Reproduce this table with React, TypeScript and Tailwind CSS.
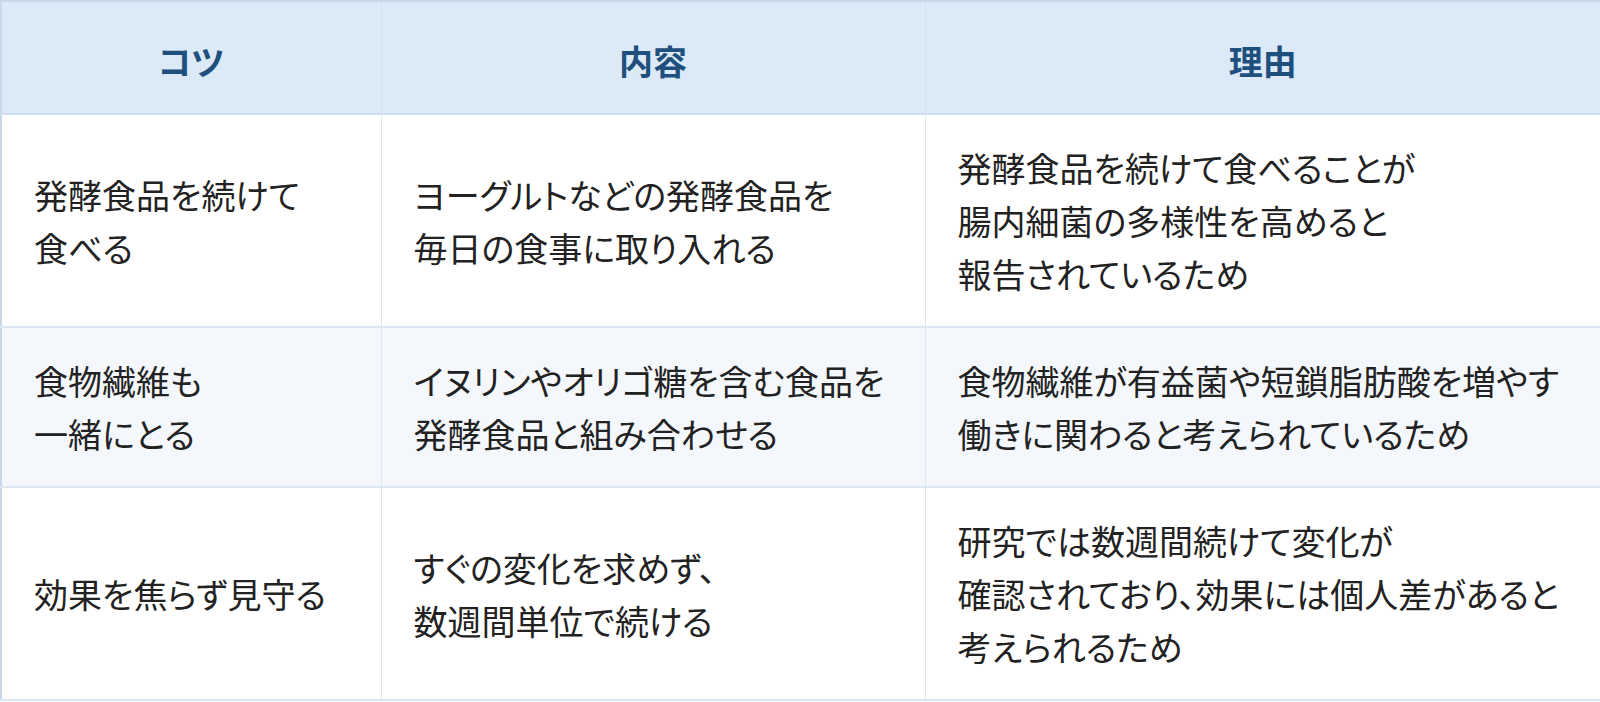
const rows = [
  {
    tip: ['発酵食品を続けて', '食べる'],
    detail: ['ヨーグルトなどの発酵食品を', '毎日の食事に取り入れる'],
    reason: ['発酵食品を続けて食べることが', '腸内細菌の多様性を高めると', '報告されているため'],
  },
  {
    tip: ['食物繊維も', '一緒にとる'],
    detail: ['イヌリンやオリゴ糖を含む食品を', '発酵食品と組み合わせる'],
    reason: ['食物繊維が有益菌や短鎖脂肪酸を増やす', '働きに関わると考えられているため'],
  },
  {
    tip: ['効果を焦らず見守る'],
    detail: ['すぐの変化を求めず、', '数週間単位で続ける'],
    reason: ['研究では数週間続けて変化が', '確認されており、効果には個人差があると', '考えられるため'],
  },
];

// Render an array of lines with explicit breaks
const Lines = ({ lines }: { lines: string[] }) => (
  <>
    {lines.map((l, i) => (
      <span key={i} className="block whitespace-nowrap">
        {l}
      </span>
    ))}
  </>
);

export default function App() {
  return (
    <div className="w-[1600px] h-[702px] bg-white font-['Noto_Sans_CJK_JP','Noto_Sans',sans-serif]">
      <table className="w-[1600px] table-fixed border-collapse border-2 border-[#c6d8ea] [font-feature-settings:'palt']">
        <colgroup>
          <col className="w-[380px]" />
          <col className="w-[544px]" />
          <col className="w-[676px]" />
        </colgroup>
        <thead>
          <tr className="h-[113px] bg-[#dce9f6] border-b-2 border-[#cfdef0]">
            {['コツ', '内容', '理由'].map((h) => (
              <th
                key={h}
                className="border-x border-[#d3e1f0] text-center align-middle text-[34px] font-bold text-[#1e4f7d] pt-[6px]"
              >
                {h}
              </th>
            ))}
          </tr>
        </thead>
        <tbody>
          {rows.map((r, i) => (
            <tr
              key={i}
              className={`${i === 1 ? 'bg-[#f4f7fc]' : 'bg-white'} border-b-2 border-[#dde7f2]`}
            >
              {[r.tip, r.detail, r.reason].map((c, j) => (
                <td
                  key={j}
                  className="border-x border-[#dde7f2] align-middle px-[32px] py-[26px] text-[34px] leading-[53px] text-[#222222]"
                >
                  <Lines lines={c} />
                </td>
              ))}
            </tr>
          ))}
        </tbody>
      </table>
    </div>
  );
}
